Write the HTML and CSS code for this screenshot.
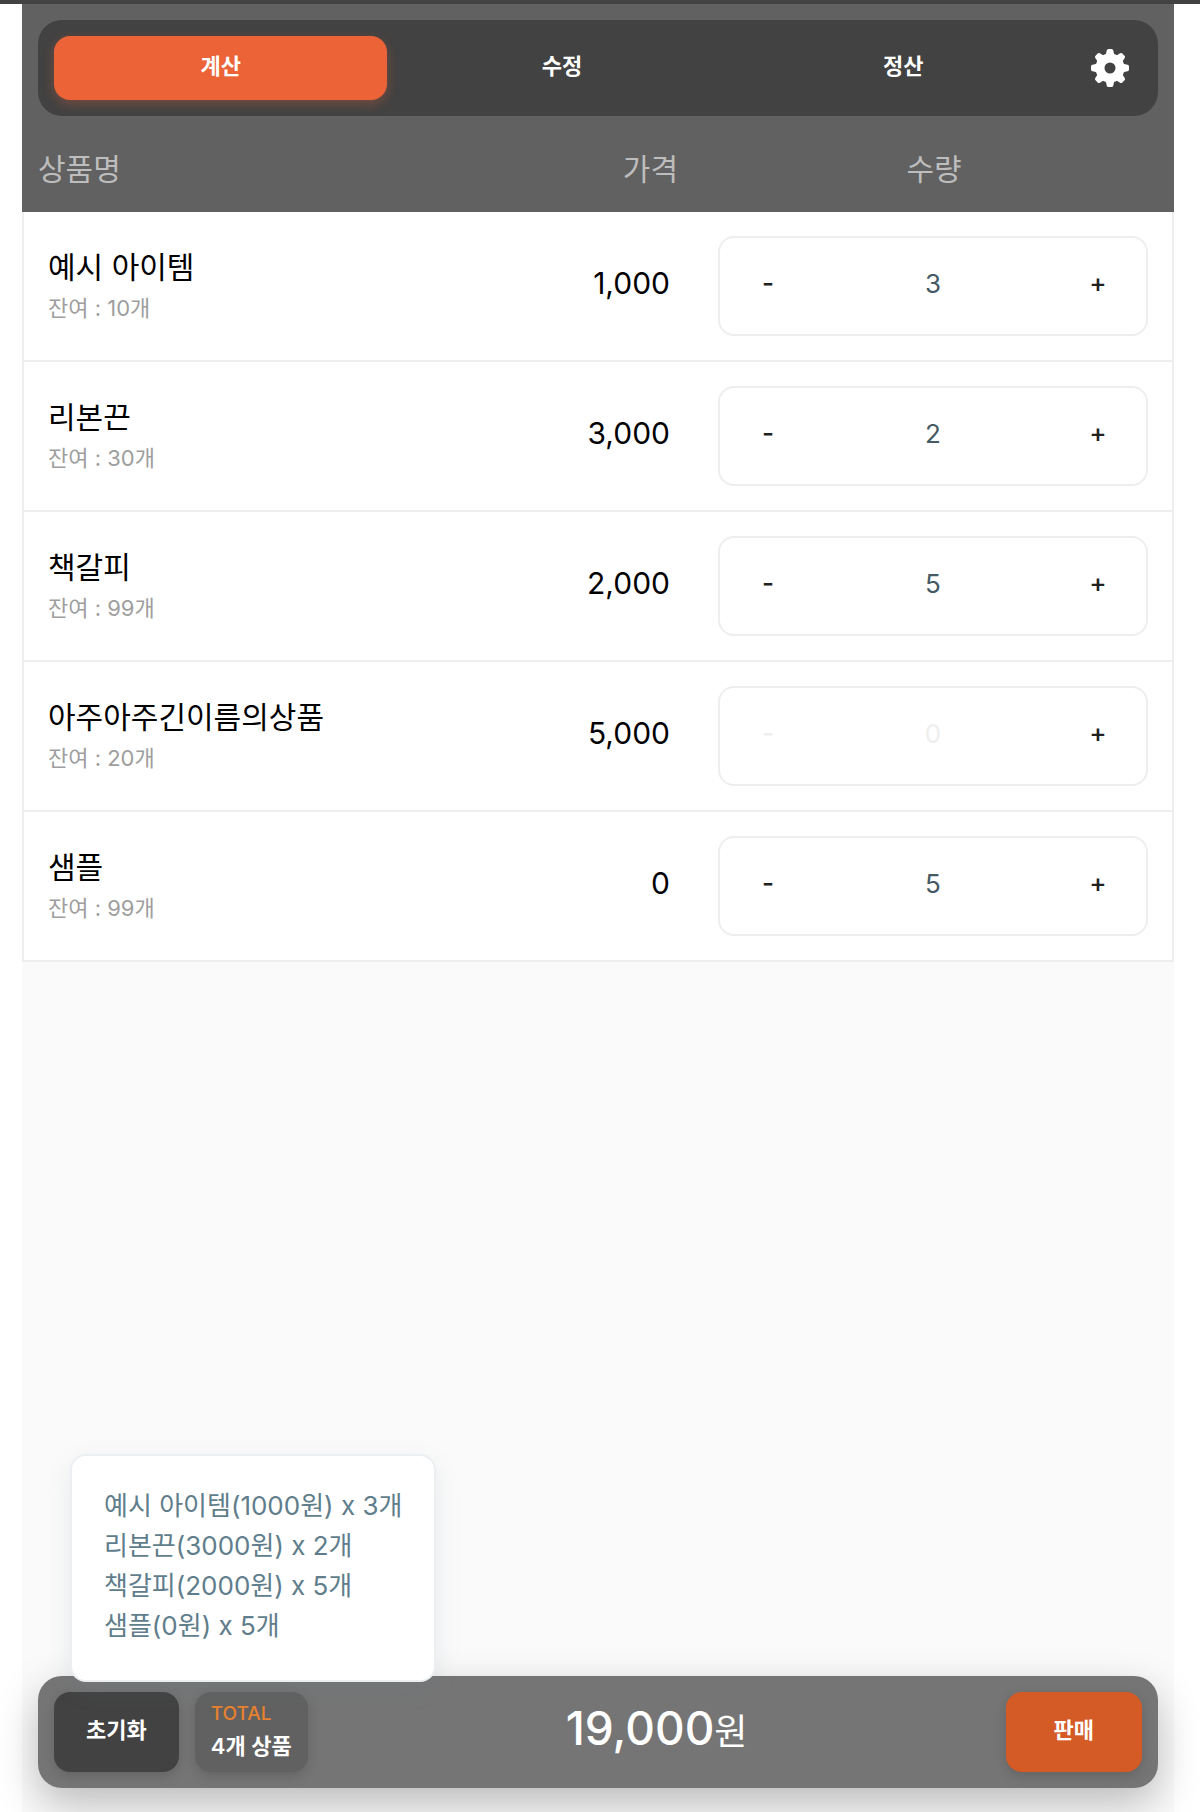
FILE: index.html
```
<!DOCTYPE html>
<html lang="ko">
<head>
    <meta charset="UTF-8">
    <meta name="viewport" content="width=device-width, initial-scale=1.0">
    <title>계산</title>
    <link rel="stylesheet" href="styles.css">
</head>
<body>
    <div class="app">
        <header>
            <nav class="tabs">
                <button type="button" class="tab active">계산</button>
                <button type="button" class="tab">수정</button>
                <button type="button" class="tab">정산</button>
                <button type="button" class="settings" aria-label="설정">
                    <svg width="38" height="38" viewBox="-19 -19 38 38" fill="#fff">
                        <circle r="10" fill="none" stroke="#fff" stroke-width="9"/>
                        <g id="teeth">
                            <path d="M-4.5 -12 L-3.3 -17.5 Q-3 -19 -1.5 -19 H1.5 Q3 -19 3.3 -17.5 L4.5 -12 Z"/>
                            <path d="M-4.5 12 L-3.3 17.5 Q-3 19 -1.5 19 H1.5 Q3 19 3.3 17.5 L4.5 12 Z"/>
                            <path d="M-12 -4.5 L-17.5 -3.3 Q-19 -3 -19 -1.5 V1.5 Q-19 3 -17.5 3.3 L-12 4.5 Z"/>
                            <path d="M12 -4.5 L17.5 -3.3 Q19 -3 19 -1.5 V1.5 Q19 3 17.5 3.3 L12 4.5 Z"/>
                        </g>
                        <use href="#teeth" transform="rotate(45)"/>
                    </svg>
                </button>
            </nav>
        </header>

        <table class="items">
            <thead>
                <tr>
                    <th class="name">상품명</th>
                    <th class="price">가격</th>
                    <th class="count">수량</th>
                </tr>
            </thead>
            <tbody>
                <tr>
                    <td class="name">예시 아이템<small>잔여 : 10개</small></td>
                    <td class="price">1,000</td>
                    <td class="count">
                        <div class="stepper">
                            <button type="button" aria-label="빼기">-</button>
                            <output>3</output>
                            <button type="button" aria-label="더하기">+</button>
                        </div>
                    </td>
                </tr>
                <tr>
                    <td class="name">리본끈<small>잔여 : 30개</small></td>
                    <td class="price">3,000</td>
                    <td class="count">
                        <div class="stepper">
                            <button type="button" aria-label="빼기">-</button>
                            <output>2</output>
                            <button type="button" aria-label="더하기">+</button>
                        </div>
                    </td>
                </tr>
                <tr>
                    <td class="name">책갈피<small>잔여 : 99개</small></td>
                    <td class="price">2,000</td>
                    <td class="count">
                        <div class="stepper">
                            <button type="button" aria-label="빼기">-</button>
                            <output>5</output>
                            <button type="button" aria-label="더하기">+</button>
                        </div>
                    </td>
                </tr>
                <tr>
                    <td class="name">아주아주긴이름의상품<small>잔여 : 20개</small></td>
                    <td class="price">5,000</td>
                    <td class="count">
                        <div class="stepper empty">
                            <button type="button" aria-label="빼기" disabled>-</button>
                            <output>0</output>
                            <button type="button" aria-label="더하기">+</button>
                        </div>
                    </td>
                </tr>
                <tr>
                    <td class="name">샘플<small>잔여 : 99개</small></td>
                    <td class="price">0</td>
                    <td class="count">
                        <div class="stepper">
                            <button type="button" aria-label="빼기">-</button>
                            <output>5</output>
                            <button type="button" aria-label="더하기">+</button>
                        </div>
                    </td>
                </tr>
            </tbody>
        </table>

        <footer class="bar">
            <ul class="popup">
                <li>예시 아이템(1000원) x 3개</li>
                <li>리본끈(3000원) x 2개</li>
                <li>책갈피(2000원) x 5개</li>
                <li>샘플(0원) x 5개</li>
            </ul>
            <button type="button" class="btn btn-reset">초기화</button>
            <button type="button" class="btn btn-total">
                <span class="label">TOTAL</span>
                <span>4개 상품</span>
            </button>
            <p class="sum"><strong>19,000</strong>원</p>
            <button type="button" class="btn btn-sell">판매</button>
        </footer>
    </div>
</body>
</html>
```
FILE: styles.css
```
* {
    box-sizing: border-box;
}

body {
    margin: 0;
    font-family: Inter, "Noto Sans CJK KR", sans-serif;
    font-weight: 400;
    background-color: #fff;
    border-top: 4px solid #424242;
    overflow-x: hidden;
}

button {
    font-family: inherit;
    border: none;
    background: none;
    padding: 0;
    cursor: pointer;
}

.app {
    display: flex;
    flex-direction: column;
    min-height: calc(100vh - 4px);
    margin: 0 26px 0 22px;
    background-color: #fafafa;
}

header {
    padding: 16px 16px 0;
    background-color: #616161;
}

.tabs {
    display: flex;
    gap: 8px;
    padding: 16px;
    border-radius: 24px;
    background-color: #424242;
}

.tab {
    flex: 1;
    height: 64px;
    padding-bottom: 4px;
    border-radius: 16px;
    color: #fff;
    font-size: 22px;
    font-weight: 600;
    line-height: 32px;
}

.tab.active {
    background-color: #ec6337;
    box-shadow: 0 4px 12px rgba(236, 99, 55, 0.3);
}

.settings {
    display: flex;
    align-items: center;
    justify-content: center;
    width: 64px;
}

/* item table */
.items {
    width: 100%;
    table-layout: fixed;
    border-spacing: 0;
    font-size: 30px;
    line-height: 48px;
}

.items th {
    height: 96px;
    padding: 10px 16px 0;
    background-color: #616161;
    color: #bdbdbd;
    font-weight: 400;
}

.items td {
    height: 150px;
    padding: 0 24px 6px;
    background-color: #fff;
    border-bottom: 2px solid #eee;
    color: #000;
}

.items td:first-child {
    padding-bottom: 4px;
    border-left: 2px solid #eee;
}

.items td:last-child {
    padding-bottom: 0;
    border-right: 2px solid #eee;
}

.items .name {
    text-align: left;
}

.items .price {
    width: 20%;
    text-align: right;
}

.items .count {
    width: 41.6667%;
    text-align: center;
}

.items small {
    display: block;
    color: #9e9e9e;
    font-size: 22px;
    line-height: 34px;
}

.stepper {
    display: flex;
    align-items: stretch;
    height: 100px;
    padding-bottom: 4px;
    border: 2px solid #eee;
    border-radius: 16px;
    font-size: 26px;
    line-height: 92px;
}

.stepper button {
    width: 96px;
    padding-bottom: 4px;
    color: #212121;
    font-size: 26px;
    font-weight: 500;
}

.stepper output {
    flex: 1;
    color: #455a64;
}

.stepper.empty output,
.stepper button:disabled {
    color: #eee;
}

/* bottom bar */
.bar {
    position: relative;
    display: flex;
    align-items: center;
    gap: 16px;
    margin: auto 16px 24px;
    padding: 16px;
    border-radius: 24px;
    background-color: #757575;
    box-shadow: 0 16px 40px rgba(0, 0, 0, 0.25);
    color: #fff;
}

.btn {
    height: 80px;
    padding: 0 32px 4px;
    border-radius: 16px;
    color: #fff;
    font-size: 22px;
    font-weight: 600;
    line-height: 32px;
    box-shadow: 0 4px 12px rgba(0, 0, 0, 0.15);
}

.btn-reset {
    background-color: #424242;
}

.btn-total {
    padding: 0 16px 4px;
    background-color: #616161;
    text-align: left;
}

.btn-total span {
    display: block;
}

.btn-total .label {
    color: #e8812e;
    font-size: 19px;
    font-weight: 500;
}

.btn-sell {
    padding: 0 48px 4px;
    background-color: #d45a26;
}

.sum {
    flex: 1;
    margin: 0;
    padding-bottom: 4px;
    font-size: 36px;
    line-height: 72px;
    text-align: center;
}

.sum strong {
    font-size: 46px;
    font-weight: 500;
}

.popup {
    position: absolute;
    left: 32px;
    bottom: calc(100% - 6px);
    margin: 0;
    padding: 30px 32px 34px;
    list-style: none;
    border: 2px solid #eceff1;
    border-radius: 16px;
    background-color: #fff;
    box-shadow: 0 8px 24px rgba(96, 125, 139, 0.12);
    color: #607d8b;
    font-size: 26px;
    line-height: 40px;
    white-space: nowrap;
}
```
